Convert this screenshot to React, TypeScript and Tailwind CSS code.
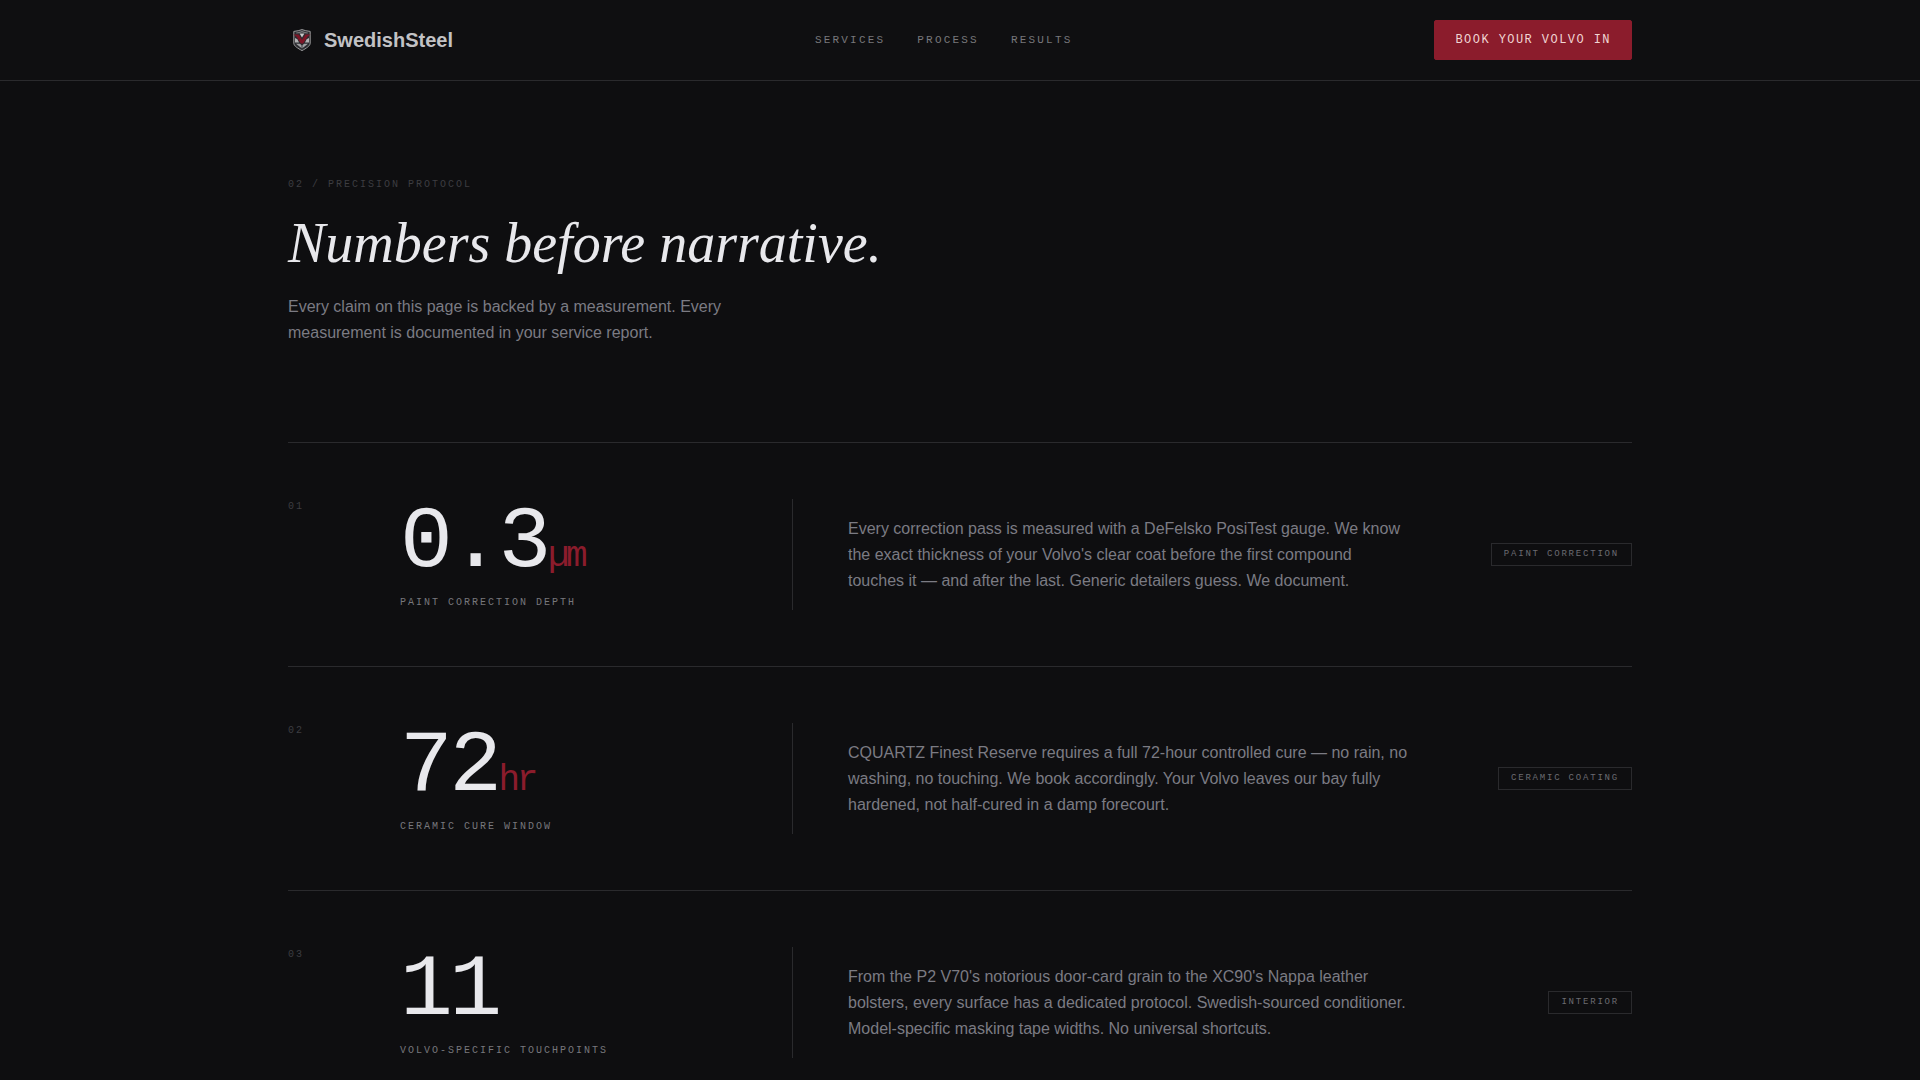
import * as React from "react";

const navLinks = [
  { label: "Services", href: "#services" },
  { label: "Process", href: "#process" },
  { label: "Results", href: "#results" },
];

interface Metric {
  index: string;
  value: string;
  unit?: string;
  label: string;
  body: string;
  tag: string;
}

const metrics: Metric[] = [
  {
    index: "01",
    value: "0.3",
    unit: "µm",
    label: "Paint correction depth",
    body: "Every correction pass is measured with a DeFelsko PosiTest gauge. We know the exact thickness of your Volvo's clear coat before the first compound touches it — and after the last. Generic detailers guess. We document.",
    tag: "Paint correction",
  },
  {
    index: "02",
    value: "72",
    unit: "hr",
    label: "Ceramic cure window",
    body: "CQUARTZ Finest Reserve requires a full 72-hour controlled cure — no rain, no washing, no touching. We book accordingly. Your Volvo leaves our bay fully hardened, not half-cured in a damp forecourt.",
    tag: "Ceramic coating",
  },
  {
    index: "03",
    value: "11",
    label: "Volvo-specific touchpoints",
    body: "From the P2 V70's notorious door-card grain to the XC90's Nappa leather bolsters, every surface has a dedicated protocol. Swedish-sourced conditioner. Model-specific masking tape widths. No universal shortcuts.",
    tag: "Interior",
  },
];

function ShieldLogo() {
  return (
    <svg viewBox="0 0 28 28" className="size-7" aria-hidden="true">
      {/* shield */}
      <path
        d="M5.8 5.4C9 5.2 11.5 4.4 14 3.6C16.5 4.4 19 5.2 22.2 5.4V17.2C22.2 20 18 22.4 14 24.6C10 22.4 5.8 20 5.8 17.2Z"
        fill="#2c2c30"
        stroke="#9a9a9c"
        strokeWidth="1"
      />
      <path d="M8.2 7C10.6 6.8 12.4 6.2 14 5.6C15.6 6.2 17.4 6.8 19.8 7" fill="none" stroke="#77777a" strokeWidth="1.2" />
      <path d="M11.6 7.6H16.4L14 11.4Z" fill="#c9c9ca" />
      {/* side plates and lower chevron */}
      <path d="M7 12L9.4 13.2L11 16.4H7ZM21 12L18.6 13.2L17 16.4H21Z" fill="#b2b2b4" />
      <path d="M8 17.8H11.8L14 19.6L16.2 17.8H20L14 22.6Z" fill="#a0a0a3" />
      <path d="M14 18V23" stroke="#2c2c30" strokeWidth="0.8" />
      {/* V */}
      <path d="M5.4 8.4H10.6L14 13.8L17.4 8.4H22.6L19.4 10.8L15.2 17.6H12.8L8.6 10.8Z" fill="#7d1526" />
    </svg>
  );
}

function Header() {
  return (
    <header className="border-b border-[#2a2a2d] bg-[#0f0f11]">
      <div className="mx-auto flex h-20 max-w-[1440px] items-center justify-between px-12">
        <a href="#top" className="flex items-center gap-2">
          <ShieldLogo />
          <span className="text-xl font-bold text-[#c2c2c5]">SwedishSteel</span>
        </a>
        <nav className="flex items-center gap-8">
          {navLinks.map((link) => (
            <a
              key={link.href}
              href={link.href}
              className="font-['Liberation_Mono',monospace] text-[11px] tracking-[0.2em] text-[#77777b] uppercase"
            >
              {link.label}
            </a>
          ))}
        </nav>
        <button
          type="button"
          className="h-10 rounded-[2px] border border-[#8b1c2c] bg-[#8b1c2c] px-5 font-['Liberation_Mono',monospace] text-xs tracking-[0.12em] text-[#f0d5d3] uppercase"
        >
          Book your Volvo in
        </button>
      </div>
    </header>
  );
}

function MetricRow({ metric }: { metric: Metric }) {
  return (
    <li className="grid grid-cols-12 border-t border-[#2a2a2d] py-14">
      <span className="font-['Liberation_Mono',monospace] text-[10px] leading-[15px] tracking-[0.2em] text-[#3d3d41]">
        {metric.index}
      </span>
      <div className="col-span-4 mr-[55px] border-r border-[#2a2a2d] font-['Liberation_Mono',monospace]">
        <p className="text-[88px] leading-none tracking-[-0.04em] text-[#e8e8ec]">
          {metric.value}
          {metric.unit && <span className="text-4xl leading-none text-[#8b1c2c]">{metric.unit}</span>}
        </p>
        <p className="mt-2 text-[10px] leading-[15px] tracking-[0.2em] text-[#77777c] uppercase">
          {metric.label}
        </p>
      </div>
      <p className="col-span-5 self-center leading-[26px] text-[#7b7b83]">{metric.body}</p>
      <div className="col-span-2 flex items-center justify-end">
        <span className="border border-[#2a2a2d] px-3 py-1 font-['Liberation_Mono',monospace] text-[9px] leading-[13px] tracking-[0.2em] whitespace-nowrap text-[#6b6b70] uppercase">
          {metric.tag}
        </span>
      </div>
    </li>
  );
}

export default function App() {
  return (
    <div id="top" className="min-h-screen bg-[#0e0e10] font-['Liberation_Sans',Arial,sans-serif]">
      <Header />
      <main>
        <section className="mx-auto max-w-[1440px] px-12 pt-24">
          <p className="font-['Liberation_Mono',monospace] text-[10px] leading-[15px] tracking-[0.2em] text-[#3d3d41] uppercase">
            02 / Precision protocol
          </p>
          <h1 className="my-5 font-['Liberation_Serif',serif] text-[56px] leading-[62px] text-[#e8e8ec] italic">
            Numbers before narrative.
          </h1>
          <p className="max-w-md leading-[26px] text-[#7b7b83]">
            Every claim on this page is backed by a measurement. Every measurement is documented in
            your service report.
          </p>
          <ul className="mt-24">
            {metrics.map((metric) => (
              <MetricRow key={metric.index} metric={metric} />
            ))}
          </ul>
        </section>
      </main>
    </div>
  );
}
